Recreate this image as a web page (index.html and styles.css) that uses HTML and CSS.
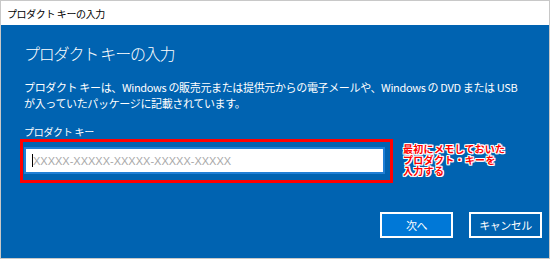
FILE: index.html
```html
<!DOCTYPE html>
<html lang="ja">
<head>
  <meta charset="UTF-8"/>
  <title>プロダクト キーの入力</title>
  <link rel="stylesheet" href="styles.css">
</head>
<body>

<div class="window">
  <div class="titlebar">プロダクト キーの入力</div>

  <div class="panel">
    <h1>プロダクト キーの入力</h1>
    <p class="desc">プロダクト キーは、Windows の販売元または提供元からの電子メールや、Windows の DVD または USB<br>が入っていたパッケージに記載されています。</p>

    <div class="label">プロダクト キー</div>
    <div class="key-row">
      <div class="highlight">
        <div class="key-input"><span class="caret"></span>XXXXX-XXXXX-XXXXX-XXXXX-XXXXX</div>
      </div>
      <div class="note">最初にメモしておいた<br>プロダクト・キーを<br>入力する</div>
    </div>

    <div class="actions">
      <button class="btn primary">次へ</button>
      <button class="btn">キャンセル</button>
    </div>
  </div>
</div>

</body>
</html>
```

FILE: styles.css
```css
body {
  margin: 0;
  font-family: "Noto Sans CJK JP", "Noto Sans", sans-serif;
}
.window {
  width: 550px;
  height: 259px;
  box-sizing: border-box;
  border: 1px solid #c8c8c8;
  display: flex;
  flex-direction: column;
}
.titlebar {
  height: 24px;
  background: #fff;
  color: #000;
  font-size: 10px;
  letter-spacing: -0.4px;
  padding-left: 6px;
  display: flex;
  align-items: center;
}
.panel {
  flex: 1;
  background: #0063b1;
  color: #fff;
  padding: 17px 7px 0 23px;
}
h1 {
  margin: 0;
  font-size: 16px;
  font-weight: 300;
  letter-spacing: -1.2px;
  line-height: 22px;
}
.desc {
  margin: 15px 0 0;
  font-size: 11px;
  letter-spacing: -0.35px;
  line-height: 16px;
}
.label {
  margin-top: 15px;
  font-size: 10px;
  letter-spacing: -0.3px;
  line-height: 12px;
}
.key-row {
  display: flex;
  align-items: flex-start;
  gap: 10px;
}
.highlight {
  margin: 1px 0 0 -4px;
  border: 3px solid #ff0000;
  padding: 5px 5px 6px 1px;
}
.key-input {
  width: 351px;
  height: 23px;
  border: 2px solid #1f7fd6;
  background: #fff;
  color: #a8a8a8;
  font-family: "Liberation Sans", sans-serif;
  font-size: 11px;
  display: flex;
  align-items: center;
  padding-left: 6px;
}
.caret {
  width: 1px;
  height: 13px;
  background: #000;
}
.note {
  margin-top: 5px;
  color: #ff0000;
  font-size: 10px;
  font-weight: bold;
  line-height: 11px;
  letter-spacing: 0.3px;
  text-shadow: 1px 0 0 #fff, -1px 0 0 #fff, 0 1px 0 #fff, 0 -1px 0 #fff,
    1px 1px 0 #fff, -1px -1px 0 #fff, 1px -1px 0 #fff, -1px 1px 0 #fff;
}
.actions {
  display: flex;
  justify-content: flex-end;
  gap: 16px;
  margin-top: 29px;
}
.btn {
  width: 73px;
  height: 26px;
  box-sizing: border-box;
  border: 2px solid #fff;
  background: #0063b1;
  color: #fff;
  font-family: "Noto Sans CJK JP", sans-serif;
  font-size: 11px;
  letter-spacing: -0.5px;
  padding: 0;
}
.btn.primary {
  background: #0078d7;
}
```
